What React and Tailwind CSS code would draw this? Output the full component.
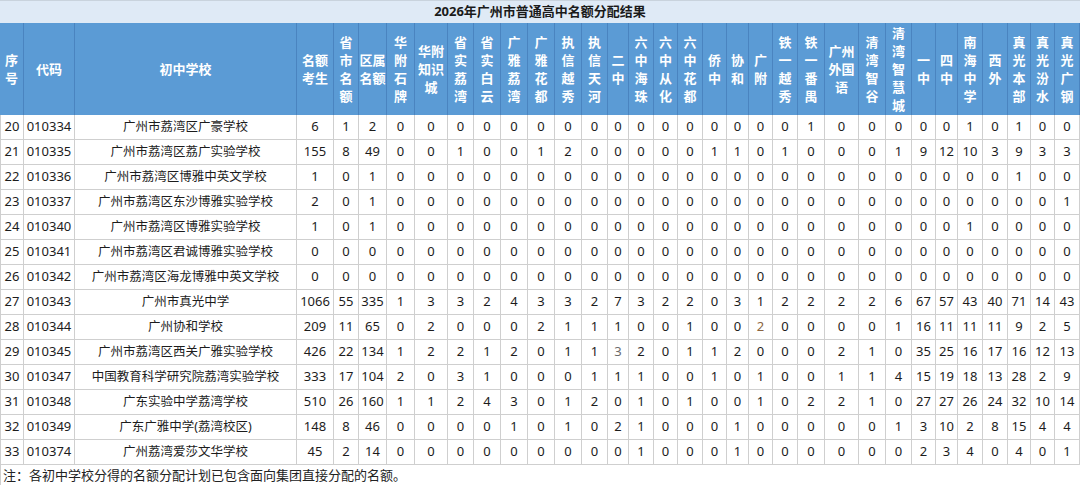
import React from 'react'

const headers = [
  ['序', '号'], ['代码'], ['初中学校'], ['名额', '考生'], ['省', '市', '名', '额'], ['区属', '名额'],
  ['华', '附', '石', '牌'], ['华附', '知识', '城'], ['省', '实', '荔', '湾'], ['省', '实', '白', '云'],
  ['广', '雅', '荔', '湾'], ['广', '雅', '花', '都'], ['执', '信', '越', '秀'], ['执', '信', '天', '河'],
  ['二', '中'], ['六', '中', '海', '珠'], ['六', '中', '从', '化'], ['六', '中', '花', '都'],
  ['侨', '中'], ['协', '和'], ['广', '附'], ['铁', '一', '越', '秀'], ['铁', '一', '番', '禺'],
  ['广州', '外国', '语'], ['清', '湾', '智', '谷'], ['清', '湾', '智', '慧', '城'], ['一', '中'],
  ['四', '中'], ['南', '海', '中', '学'], ['西', '外'], ['真', '光', '本', '部'], ['真', '光', '汾', '水'],
  ['真', '光', '广', '钢'],
]

const rows = [
  ['20', '010334', '广州市荔湾区广豪学校', '6 1 2 0 0 0 0 0 0 0 0 0 0 0 0 0 0 0 0 1 0 0 0 0 0 1 0 1 0 0'],
  ['21', '010335', '广州市荔湾区荔广实验学校', '155 8 49 0 0 1 0 0 1 2 0 0 0 0 0 1 1 0 1 0 0 0 1 9 12 10 3 9 3 3'],
  ['22', '010336', '广州市荔湾区博雅中英文学校', '1 0 1 0 0 0 0 0 0 0 0 0 0 0 0 0 0 0 0 0 0 0 0 0 0 0 0 1 0 0'],
  ['23', '010337', '广州市荔湾区东沙博雅实验学校', '2 0 1 0 0 0 0 0 0 0 0 0 0 0 0 0 0 0 0 0 0 0 0 0 0 0 0 0 0 1'],
  ['24', '010340', '广州市荔湾区博雅实验学校', '1 0 1 0 0 0 0 0 0 0 0 0 0 0 0 0 0 0 0 0 0 0 0 0 0 1 0 0 0 0'],
  ['25', '010341', '广州市荔湾区君诚博雅实验学校', '0 0 0 0 0 0 0 0 0 0 0 0 0 0 0 0 0 0 0 0 0 0 0 0 0 0 0 0 0 0'],
  ['26', '010342', '广州市荔湾区海龙博雅中英文学校', '0 0 0 0 0 0 0 0 0 0 0 0 0 0 0 0 0 0 0 0 0 0 0 0 0 0 0 0 0 0'],
  ['27', '010343', '广州市真光中学', '1066 55 335 1 3 3 2 4 3 3 2 7 3 2 2 0 3 1 2 2 2 2 6 67 57 43 40 71 14 43'],
  ['28', '010344', '广州协和学校', '209 11 65 0 2 0 0 0 2 1 1 1 0 0 1 0 0 2 0 0 0 0 1 16 11 11 11 9 2 5'],
  ['29', '010345', '广州市荔湾区西关广雅实验学校', '426 22 134 1 2 2 1 2 0 1 1 3 2 0 1 1 2 0 0 0 2 1 0 35 25 16 17 16 12 13'],
  ['30', '010347', '中国教育科学研究院荔湾实验学校', '333 17 104 2 0 3 1 0 0 0 1 1 1 0 0 1 0 1 0 0 1 1 4 15 19 18 13 28 2 9'],
  ['31', '010348', '广东实验中学荔湾学校', '510 26 160 1 1 2 4 3 0 1 2 0 1 0 1 0 0 1 0 2 2 1 0 27 27 26 24 32 10 14'],
  ['32', '010349', '广东广雅中学(荔湾校区)', '148 8 46 0 0 0 0 1 0 1 0 2 1 0 0 0 1 0 0 0 0 0 1 3 10 2 8 15 4 4'],
  ['33', '010374', '广州荔湾爱莎文华学校', '45 2 14 0 0 0 0 0 0 0 0 0 1 0 0 0 1 0 0 0 0 0 0 2 3 4 0 4 0 1'],
]

// odd-coloured figures in the source sheet: row number - index in the figures list
const tinted = { '28-17': 'text-[#8a6440]', '29-11': 'text-[#6b6b6b]' }

const font = { fontFamily: '"Noto Sans", "Noto Sans CJK SC", sans-serif' }

export default function App() {
  return (
    <div className="w-[1080px] h-[485px] overflow-hidden bg-white text-[#1c1c1c]" style={font}>
      <div className="grid grid-cols-[24px_51px_222px_37px_25px_28px_28px_33px_26px_27px_27px_27px_27px_26px_21px_25px_24px_25px_24px_22px_24px_25px_27px_34px_27px_26px_24px_22px_25px_25px_23px_24px_25px]">
        {/* title */}
        <div className="col-span-full h-[23px] flex items-center justify-center bg-[#dfeaf6] border-t border-[#c9d3dd] text-[13px] font-bold text-[#1a1a1a]">
          2026年广州市普通高中名额分配结果
        </div>

        {/* header */}
        {headers.map((lines, i) => (
          <div
            key={'h' + i}
            className="h-[92px] flex flex-col items-center justify-center bg-[#5b9bd5] border-r border-[#4a84c0] last:border-r-0 text-white text-[13px] font-bold leading-[18px] text-center"
          >
            {lines.map((l, j) => (
              <span key={j} className="whitespace-nowrap">{l}</span>
            ))}
          </div>
        ))}

        {/* body */}
        {rows.map(([no, code, name, nums]) => (
          <React.Fragment key={no}>
            <div className="h-[25px] flex items-center justify-center border-l border-r border-b border-[#cfcfcf] text-[13px]">{no}</div>
            <div className="h-[25px] flex items-center justify-center border-r border-b border-[#cfcfcf] text-[13px]">{code}</div>
            <div className="h-[25px] flex items-center justify-center border-r border-b border-[#cfcfcf] text-[12.5px] whitespace-nowrap">{name}</div>
            {nums.split(' ').map((n, k) => (
              <div
                key={k}
                className={`h-[25px] flex items-center justify-center border-r border-b border-[#cfcfcf] text-[13px] ${tinted[no + '-' + k] || ''}`}
              >
                {n}
              </div>
            ))}
          </React.Fragment>
        ))}

        {/* note */}
        <div className="col-span-full h-[22px] flex items-center pl-[2px] border-l border-[#cfcfcf] text-[13px] text-[#222]">
          注：各初中学校分得的名额分配计划已包含面向集团直接分配的名额。
        </div>
      </div>
    </div>
  )
}
